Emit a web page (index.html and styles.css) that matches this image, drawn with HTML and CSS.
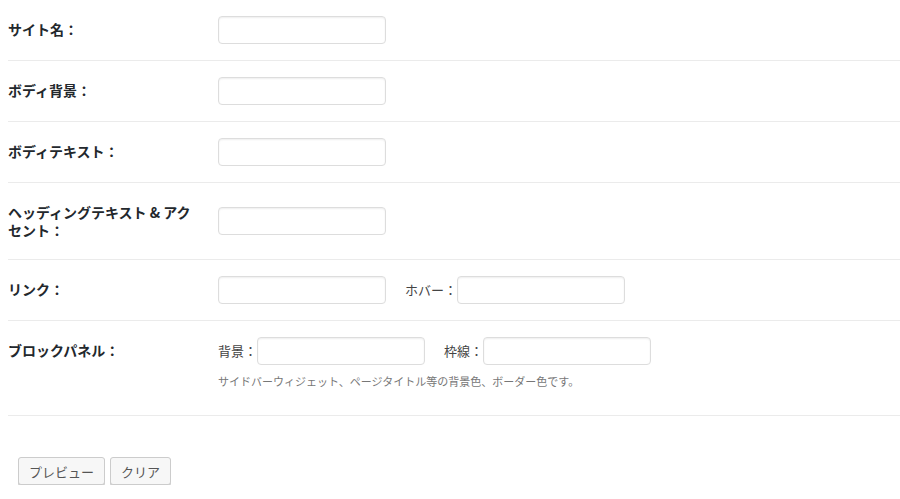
FILE: index.html
```html
<!DOCTYPE html>
<html lang="ja">
<head>
  <meta charset="UTF-8">
  <title>カラー設定</title>
  <link rel="stylesheet" href="styles.css">
</head>
<body>
  <form class="wrap">
    <table class="form-table">
      <tr>
        <th>サイト名：</th>
        <td>
          <div class="fields"><input type="text" class="color-field"></div>
        </td>
      </tr>
      <tr>
        <th>ボディ背景：</th>
        <td>
          <div class="fields"><input type="text" class="color-field"></div>
        </td>
      </tr>
      <tr>
        <th>ボディテキスト：</th>
        <td>
          <div class="fields"><input type="text" class="color-field"></div>
        </td>
      </tr>
      <tr>
        <th>ヘッディングテキスト &amp; アクセント：</th>
        <td>
          <div class="fields"><input type="text" class="color-field"></div>
        </td>
      </tr>
      <tr>
        <th>リンク：</th>
        <td>
          <div class="fields">
            <input type="text" class="color-field">
            <label class="pair">ホバー：<input type="text" class="color-field"></label>
          </div>
        </td>
      </tr>
      <tr>
        <th>ブロックパネル：</th>
        <td>
          <div class="fields">
            <label class="pair">背景：<input type="text" class="color-field"></label>
            <label class="pair">枠線：<input type="text" class="color-field"></label>
          </div>
          <p class="description">サイドバーウィジェット、ページタイトル等の背景色、ボーダー色です。</p>
        </td>
      </tr>
    </table>

    <p class="submit">
      <button type="button" class="button">プレビュー</button>
      <button type="reset" class="button">クリア</button>
    </p>
  </form>
</body>
</html>
```

FILE: styles.css
```css
body {
  margin: 0;
  background: #fff;
  color: #333;
  font-family: "Noto Sans CJK JP", "Liberation Sans", sans-serif;
  font-size: 13px;
}
.wrap {
  padding-left: 8px;
}
.form-table {
  width: 100%;
  border-collapse: collapse;
}
.form-table tr {
  border-bottom: 1px solid #ebebeb;
}
.form-table th {
  width: 190px;
  padding: 20px 10px 20px 0;
  text-align: left;
  vertical-align: top;
  font-size: 14px;
  font-weight: 700;
  line-height: 1.3;
  color: #23282d;
}
.form-table td {
  padding: 16px 10px;
  vertical-align: middle;
  line-height: 1.3;
}
.fields {
  display: flex;
  align-items: center;
  gap: 19px;
  height: 28px;
}
.pair {
  display: flex;
  align-items: center;
  color: #444;
}
.color-field {
  box-sizing: border-box;
  width: 168px;
  height: 28px;
  margin: 0;
  padding: 3px 5px;
  border: 1px solid #ddd;
  border-radius: 4px;
  box-shadow: inset 0 1px 2px rgba(0,0,0,0.07);
  background: #fff;
  font: inherit;
}
.description {
  margin: 8px 0 9px;
  font-size: 11px;
  line-height: 17px;
  color: #777;
}
.submit {
  display: flex;
  gap: 5px;
  margin: 0;
  padding: 41px 0 0 10px;
}
.button {
  height: 28px;
  padding: 0 10px;
  border: 1px solid #ccc;
  border-radius: 3px;
  background: #f7f7f7;
  box-shadow: 0 1px 0 #ccc;
  color: #555;
  font-family: inherit;
  font-size: 13px;
  cursor: pointer;
}
.button:hover {
  background: #fafafa;
  border-color: #999;
}
```
